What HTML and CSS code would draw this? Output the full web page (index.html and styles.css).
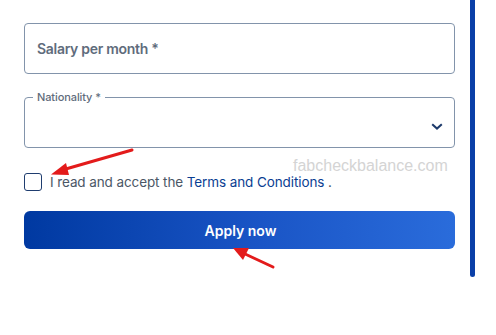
FILE: index.html
```html
<!DOCTYPE html>
<html>
<head>
<meta charset="utf-8">
<link rel="stylesheet" href="styles.css">
</head>
<body>
<div class="page">
  <form class="form">
    <div class="field">
      <span class="placeholder">Salary per month *</span>
    </div>
    <div class="field select">
      <span class="legend">Nationality *</span>
      <svg class="chevron" width="12" height="7" viewBox="0 0 12 7"><path d="M1.2 1.2 L6 5.6 L10.8 1.2" fill="none" stroke="#1d3a6b" stroke-width="2"/></svg>
    </div>
    <label class="check-row">
      <span class="checkbox"></span>
      <span class="check-text">I read and accept the <a class="link">Terms and Conditions</a> .</span>
    </label>
    <button type="button" class="apply">Apply now</button>
  </form>
  <div class="scrollbar"></div>
  <div class="watermark">fabcheckbalance.com</div>
  <svg class="arrows" width="496" height="335" viewBox="0 0 496 335">
    <line x1="132" y1="150" x2="64" y2="169.5" stroke="#e31b1b" stroke-width="3" stroke-linecap="round"/>
    <polygon points="51,174.5 66,163 69,175" fill="#e31b1b"/>
    <line x1="273" y1="267" x2="244" y2="253.5" stroke="#e31b1b" stroke-width="3" stroke-linecap="round"/>
    <polygon points="233,248 249,248 243,260" fill="#e31b1b"/>
  </svg>
</div>
</body>
</html>
```
FILE: styles.css
```css
* { box-sizing: border-box; }
html, body { margin: 0; padding: 0; background: #fff; }
body { font-family: Inter, "Noto Sans", sans-serif; width: 496px; height: 335px; overflow: hidden; }
.page { position: relative; display: flex; align-items: flex-start; width: 496px; height: 335px; }
.form { display: flex; flex-direction: column; width: 431px; margin-left: 24px; margin-top: 23px; }
.field { position: relative; height: 51px; border: 1px solid #8294ab; border-radius: 4px; display: flex; align-items: center; padding-left: 12px; }
.placeholder { font-size: 14px; font-weight: 600; color: #5f6c7c; letter-spacing: -0.3px; }
.select { margin-top: 23px; }
.legend { position: absolute; left: 8px; top: -8px; padding: 0 4px; background: #fff; font-size: 11px; font-weight: 500; color: #5f6c7c; line-height: 14px; letter-spacing: -0.1px; }
.chevron { position: absolute; right: 11px; top: 25px; }
.check-row { display: flex; align-items: center; margin-top: 25px; gap: 8px; height: 18px; }
.checkbox { width: 18px; height: 18px; border: 1.5px solid #1f3d6f; border-radius: 3px; flex: none; }
.check-text { font-size: 13.5px; color: #4b5766; letter-spacing: -0.1px; }
.link { color: #0b3e92; }
.apply { margin-top: 20px; height: 38px; border: 0; border-radius: 6px; background: linear-gradient(90deg, #0039a1 0%, #1a55c6 55%, #2a6cdb 100%); color: #fff; font-family: Inter, "Noto Sans", sans-serif; font-size: 14px; font-weight: 600; padding: 0; padding-left: 2px; }
.scrollbar { width: 5px; height: 277px; margin-left: 15px; background: #0a3fa8; border-radius: 0 0 3px 3px; }
.watermark { position: absolute; left: 293px; top: 157px; font-family: "Liberation Sans", Arial, sans-serif; font-size: 16px; color: #d4d4d4; }
.arrows { position: absolute; left: 0; top: 0; pointer-events: none; }
```
